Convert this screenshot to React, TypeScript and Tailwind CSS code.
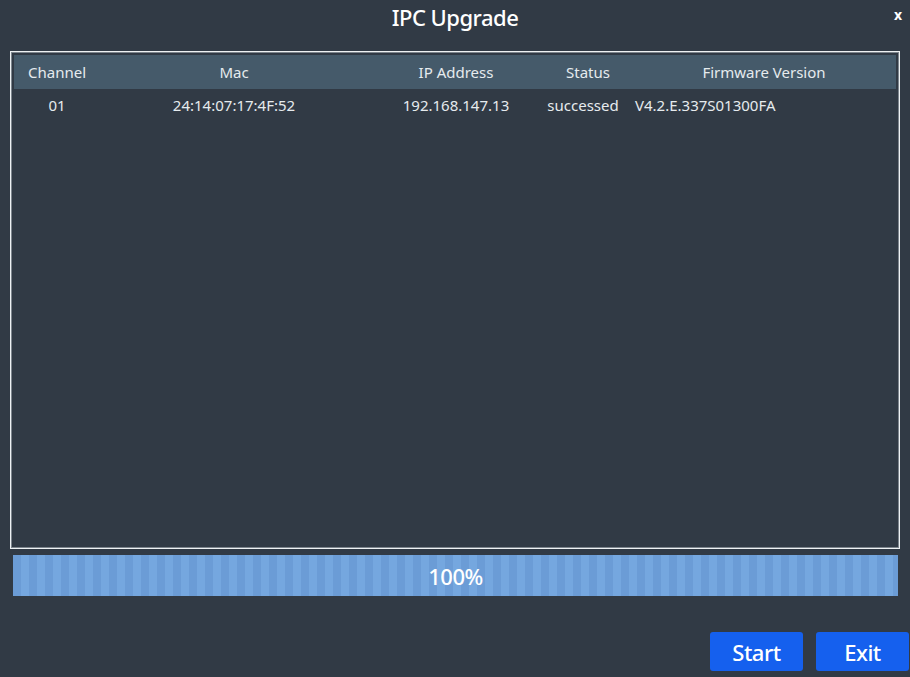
import React from 'react';

type Row = {
  channel: string;
  mac: string;
  ip: string;
  status: string;
  firmware: string;
};

const rows: Row[] = [
  {
    channel: '01',
    mac: '24:14:07:17:4F:52',
    ip: '192.168.147.13',
    status: 'successed',
    firmware: 'V4.2.E.337S01300FA',
  },
];

const cols = 'grid grid-cols-[86px_268px_176px_88px_1fr]';

export default function App() {
  return (
    <div
      className="w-[910px] h-[677px] bg-[#313a45] text-white flex flex-col overflow-hidden"
      style={{ fontFamily: '"Noto Sans", "Open Sans", sans-serif' }}
    >
      {/* titulo */}
      <div className="relative h-[37px] flex items-center justify-center">
        <h1 className="-mt-[3px] text-[22px] font-medium leading-none tracking-[-0.5px]">IPC Upgrade</h1>
        <button className="absolute right-[8px] top-[8px] text-[14px] font-bold leading-none">x</button>
      </div>

      {/* tabela */}
      <div className="mt-[14px] mx-[10px] h-[498px] border border-[#eef1f3]">
        <div className="h-full border border-[#7d858d] p-[2px]">
          <div className={`${cols} h-[34px] items-center bg-[#455a6a] text-[15px] text-[#e6ebee]`}>
            <div className="text-center">Channel</div>
            <div className="text-center">Mac</div>
            <div className="text-center">IP Address</div>
            <div className="text-center">Status</div>
            <div className="text-center">Firmware Version</div>
          </div>
          {rows.map(r => (
            <div key={r.channel} className={`${cols} h-[32px] items-center text-[15px] text-[#e6ebee]`}>
              <div className="text-center">{r.channel}</div>
              <div className="text-center">{r.mac}</div>
              <div className="text-center">{r.ip}</div>
              <div className="text-center pr-[10px]">{r.status}</div>
              <div className="pl-[3px]">{r.firmware}</div>
            </div>
          ))}
        </div>
      </div>

      {/* barra de progresso */}
      <div className="mt-[6px] mx-[13px] mr-[12px] h-[41px] flex items-center justify-center bg-[repeating-linear-gradient(90deg,#6b9cd6_0px,#6b9cd6_8px,#75a7df_8px,#75a7df_16px)]">
        <span className="text-[22px] font-medium leading-none tracking-[-0.5px]">100%</span>
      </div>

      {/* botoes */}
      <div className="mt-auto mb-[6px] flex justify-end gap-[13px] pr-[1px]">
        <button className="w-[93px] h-[39px] rounded-[3px] bg-[#1560ee] text-[22px] font-medium leading-none tracking-[-0.5px]">Start</button>
        <button className="w-[93px] h-[39px] rounded-[3px] bg-[#1560ee] text-[22px] font-medium leading-none tracking-[-0.5px]">Exit</button>
      </div>
    </div>
  );
}
